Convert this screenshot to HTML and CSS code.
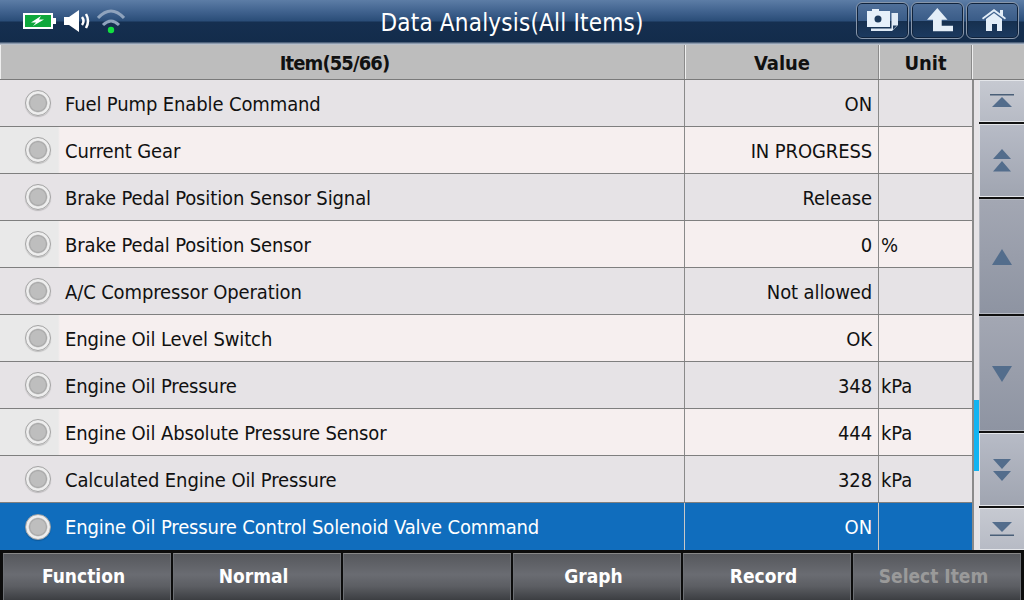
FILE: index.html
```html
<!DOCTYPE html>
<html lang="en">
<head>
<meta charset="UTF-8" />
<title>Data Analysis(All Items)</title>
<link rel="stylesheet" href="styles.css">
</head>
<body>
<header class="topbar">
  <div class="status">
    <svg class="battery" width="34" height="16" viewBox="0 0 34 16">
      <rect x="1" y="1" width="28" height="14" fill="#0fa83c" stroke="#fff" stroke-width="2"/>
      <rect x="29" y="5" width="4" height="6" fill="#fff"/>
      <path d="M18 3 L8 9.500 H13 L10 13 L21 6.500 H16 Z" fill="#fff"/>
    </svg>
    <svg class="speaker" width="28" height="24" viewBox="0 0 28 24">
      <path d="M1 8 H6 L16 1 V23 L6 16 H1 Z" fill="#fff"/>
      <path d="M19 8 Q22 12 19 16" fill="none" stroke="#fff" stroke-width="2.500"/>
      <path d="M23 5 Q27 12 23 19" fill="none" stroke="#fff" stroke-width="2.500"/>
    </svg>
    <svg class="wifi" width="28" height="25" viewBox="0 0 28 25">
      <path d="M1 9 Q14 -5 27 9" fill="none" stroke="#8fa3bd" stroke-width="3"/>
      <path d="M6 16 Q14 8 22 16" fill="none" stroke="#8fa3bd" stroke-width="3"/>
      <circle cx="14" cy="21" r="3.200" fill="#12e040"/>
    </svg>
  </div>
  <h1 class="title">Data Analysis(All Items)</h1>
  <div class="tools">
    <button class="tool">
      <svg width="32" height="23" viewBox="0 0 32 23">
        <path d="M24.500 4 H31 V16 L25 22 H4 V19.500 H24.500 Z" fill="#dfeaf6"/>
        <path d="M26 20.500 V16.500 H30 Z" fill="#1d3a5c"/>
        <path d="M0 2 H5 V0 H12 V2 H23 V18 H0 Z" fill="#e6f0fa"/>
        <circle cx="11" cy="10" r="3.500" fill="#1d3a5c"/>
      </svg>
    </button>
    <button class="tool tool-up">
      <svg width="26" height="24" viewBox="0 0 26 24">
        <path d="M10.300 0 L20.500 11.700 H14.700 V17.700 H26 V23.300 H6 V11.700 H0 Z" fill="#e4eef8"/>
      </svg>
    </button>
    <button class="tool tool-home">
      <svg width="24" height="22" viewBox="0 0 24 22">
        <path d="M0 9 L12 0 L18 4.500 V1 H21 V6.750 L24 9 L23 10.500 L12 2.500 L1 10.500 Z" fill="#e4eef8"/>
        <path d="M12 4 L20 10 V22 H15 V15 H10 V22 H4 V10 Z" fill="#e4eef8"/>
      </svg>
    </button>
  </div>
</header>

<main class="body">
  <div class="grid-head">
    <div class="hcell hcell-item">Item(55/66)</div>
    <div class="hcell hcell-value">Value</div>
    <div class="hcell hcell-unit">Unit</div>
    <div class="hcell hcell-end"></div>
  </div>
  <div class="grid-body">
    <div class="rows">
      <div class="row"><div class="cell-item"><span class="radio"></span>Fuel Pump Enable Command</div><div class="cell-value">ON</div><div class="cell-unit"></div></div>
      <div class="row"><div class="cell-item"><span class="radio"></span>Current Gear</div><div class="cell-value">IN PROGRESS</div><div class="cell-unit"></div></div>
      <div class="row"><div class="cell-item"><span class="radio"></span>Brake Pedal Position Sensor Signal</div><div class="cell-value">Release</div><div class="cell-unit"></div></div>
      <div class="row"><div class="cell-item"><span class="radio"></span>Brake Pedal Position Sensor</div><div class="cell-value">0</div><div class="cell-unit">%</div></div>
      <div class="row"><div class="cell-item"><span class="radio"></span>A/C Compressor Operation</div><div class="cell-value">Not allowed</div><div class="cell-unit"></div></div>
      <div class="row"><div class="cell-item"><span class="radio"></span>Engine Oil Level Switch</div><div class="cell-value">OK</div><div class="cell-unit"></div></div>
      <div class="row"><div class="cell-item"><span class="radio"></span>Engine Oil Pressure</div><div class="cell-value">348</div><div class="cell-unit">kPa</div></div>
      <div class="row"><div class="cell-item"><span class="radio"></span>Engine Oil Absolute Pressure Sensor</div><div class="cell-value">444</div><div class="cell-unit">kPa</div></div>
      <div class="row"><div class="cell-item"><span class="radio"></span>Calculated Engine Oil Pressure</div><div class="cell-value">328</div><div class="cell-unit">kPa</div></div>
      <div class="row selected"><div class="cell-item"><span class="radio"></span>Engine Oil Pressure Control Solenoid Valve Command</div><div class="cell-value">ON</div><div class="cell-unit"></div></div>
    </div>
    <div class="track"><div class="thumb"></div></div>
    <div class="scroll">
      <button class="sbtn sbtn-end">
        <svg width="24" height="14" viewBox="0 0 24 14"><rect y="0" width="24" height="1.500" fill="#4a5f78"/><path d="M12 3 L22 13 H2 Z" fill="#536d8c"/></svg>
      </button>
      <button class="sbtn sbtn-page">
        <svg width="20" height="24" viewBox="0 0 20 24"><path d="M10 0 L19 10 H1 Z M10 12 L19 22.500 H1 Z" fill="#536d8c"/></svg>
      </button>
      <button class="sbtn sbtn-line">
        <svg width="20" height="16" viewBox="0 0 20 16"><path d="M10 0 L20 16 H0 Z" fill="#536d8c"/></svg>
      </button>
      <button class="sbtn sbtn-line">
        <svg width="20" height="16" viewBox="0 0 20 16"><path d="M0 0 H20 L10 16 Z" fill="#536d8c"/></svg>
      </button>
      <button class="sbtn sbtn-page">
        <svg width="20" height="24" viewBox="0 0 20 24"><path d="M1 1 H19 L10 11 Z M1 13 H19 L10 23 Z" fill="#536d8c"/></svg>
      </button>
      <button class="sbtn sbtn-end">
        <svg width="24" height="14" viewBox="0 0 24 14"><path d="M2 0 H22 L12 10 Z" fill="#536d8c"/><rect y="12.500" width="24" height="1.500" fill="#4a5f78"/></svg>
      </button>
    </div>
  </div>
</main>

<footer class="actions">
  <button class="action">Function</button>
  <button class="action">Normal</button>
  <button class="action"></button>
  <button class="action">Graph</button>
  <button class="action">Record</button>
  <button class="action disabled">Select Item</button>
</footer>
</body>
</html>
```

FILE: styles.css
```css
* {
  box-sizing: border-box;
}
html, body {
  margin: 0;
  padding: 0;
}
body {
  width: 1024px;
  height: 600px;
  overflow: hidden;
  display: flex;
  flex-direction: column;
  background: #e6e3e6;
  font-family: "DejaVu Sans Condensed", "DejaVu Sans", sans-serif;
  font-stretch: condensed;
  font-size: 20px;
  letter-spacing: -0.12px;
  color: #111;
}
button {
  font-family: inherit;
  font-stretch: inherit;
  padding: 0;
  border: none;
}

/* top bar */
.topbar {
  height: 45px;
  flex: none;
  display: flex;
  align-items: center;
  background: linear-gradient(#5d7da6 0, #3f618d 12px, #2a4d78 21px, #152f50 22px, #132c4b 42px, #8a98ab 43px, #8a98ab 44px, #e8e8e8 45px);
}
.status {
  display: flex;
  align-items: center;
  gap: 6px;
  padding: 0 0 3px 23px;
  width: 300px;
}
.title {
  margin: 0;
  flex: 1;
  text-align: center;
  font-weight: normal;
  font-size: 24px;
  letter-spacing: 0.2px;
  color: #fff;
  padding-top: 1px;
}
.tools {
  width: 300px;
  display: flex;
  justify-content: flex-end;
  gap: 2px;
  padding: 0 5px 5px 0;
}
.tool {
  width: 53px;
  height: 37px;
  display: flex;
  align-items: center;
  justify-content: center;
  border: 1px solid #8796aa;
  border-radius: 6px;
  box-shadow: inset 0 0 0 1px #10233c;
  background: linear-gradient(#50709a, #3a5c88 50%, #16304f 52%, #1c3a60);
}
.tool-up svg {
  margin-left: 5px;
}
.tool-home svg {
  margin-left: 3px;
}

/* table */
.body {
  flex: 1;
  display: flex;
  flex-direction: column;
  min-height: 0;
}
.grid-head {
  height: 35px;
  flex: none;
  display: flex;
  background: #bdbdbd;
  border-bottom: 1px solid #7a7a7a;
  font-weight: bold;
  letter-spacing: 0;
}
.hcell {
  display: flex;
  align-items: center;
  justify-content: center;
  padding-top: 2px;
  border-right: 1px solid #8a8a8a;
  border-left: 1px solid #eee;
}
.hcell-item {
  width: 685px;
  padding-right: 16px;
  letter-spacing: -0.9px;
}
.hcell-value { width: 194px; }
.hcell-unit { width: 93px; }
.hcell-end { flex: 1; border-right: none; }

.grid-body {
  flex: 1;
  display: flex;
  min-height: 0;
}
.rows {
  width: 972px;
  flex: none;
}
.row {
  height: 47px;
  display: flex;
  align-items: center;
  border-bottom: 1px solid #7f7f7f;
  background: #e6e3e6;
}
.row:nth-child(even) {
  background: #f6efef;
}
.row:nth-child(even) .cell-item {
  background: linear-gradient(90deg, #e9e9e9 0, #e9e9e9 58px, #f6efef 60px);
}
.row.selected,
.row.selected .cell-item {
  background: #106dbd;
  color: #fff;
}
.row.selected {
  border-bottom: none;
}
.row.selected .cell-item,
.row.selected .cell-value {
  padding-top: 1px;
  border-right-color: #c8c8c8;
}
.row.selected .radio {
  margin-top: -1px;
}
.cell-item,
.cell-value,
.cell-unit {
  height: 100%;
  display: flex;
  align-items: center;
  padding-top: 2px;
  border-right: 1px solid #8a8a8a;
}
.cell-item {
  width: 685px;
  padding-left: 25px;
}
.cell-value {
  width: 194px;
  justify-content: flex-end;
  padding-right: 6px;
}
.cell-unit {
  flex: 1;
  border-right: none;
  padding-left: 2px;
}
.radio {
  width: 26px;
  height: 26px;
  margin: -2px 14px 0 0;
  flex: none;
  border-radius: 50%;
  border: 1px solid #a4a4a4;
  box-shadow: 0 1px 1px rgba(0, 0, 0, 0.18);
  background: radial-gradient(circle, #bebebe 0, #bebebe 42%, #a8a8a8 50%, #f0f0f0 58%, #dcdcdc 100%);
}

/* scrollbar */
.track {
  width: 7px;
  flex: none;
  position: relative;
  background: #e6e3e6;
  border-left: 2px solid #8a8a8a;
}
.thumb {
  position: absolute;
  left: 0;
  right: 0;
  top: 320px;
  height: 71px;
  background: #12b4f2;
}
.scroll {
  flex: 1;
  display: flex;
  flex-direction: column;
  gap: 2px;
  background: #111;
}
.sbtn {
  display: flex;
  align-items: center;
  justify-content: center;
  border: 1px solid #e4e6ea;
  border-right: none;
}
.sbtn-end {
  height: 42px;
  background: linear-gradient(#c6c9d1, #b7bbc5);
}
.sbtn-page {
  height: 73px;
  background: linear-gradient(#b7bbc6, #a0a5b1);
}
.sbtn-line {
  flex: 1;
  border-color: #b5b9c2;
  background: linear-gradient(#a3a7b3, #8e94a2);
}

/* bottom buttons */
.actions {
  height: 50px;
  flex: none;
  display: flex;
  gap: 2px;
  background: #0c0c0c;
  padding: 3px 3px 0 3px;
}
.action {
  flex: 1;
  height: 47px;
  padding: 0 7px 2px 0;
  border-top: 1px solid #888;
  border-left: 1px solid #6c6f74;
  border-right: 1px solid #6c6f74;
  background: linear-gradient(#56585d, #6a6c72 45%, #5c5e63 70%, #3c3e42);
  color: #fff;
  font-weight: bold;
  font-size: 19px;
  letter-spacing: 0;
}
.action.disabled {
  color: #9a9a9a;
}
```
